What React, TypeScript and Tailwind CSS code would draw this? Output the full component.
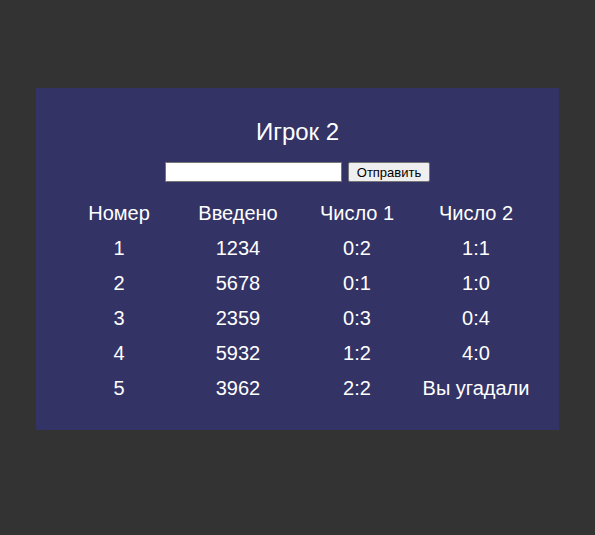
const ROWS = [
  ['1', '1234', '0:2', '1:1'],
  ['2', '5678', '0:1', '1:0'],
  ['3', '2359', '0:3', '0:4'],
  ['4', '5932', '1:2', '4:0'],
  ['5', '3962', '2:2', 'Вы угадали'],
]

export default function App() {
  return (
    <div className="min-h-[535px] bg-[#333333] pt-[88px] font-['Liberation_Sans',Arial,sans-serif]">
      <div className="mx-auto flex h-[342px] w-[523px] flex-col items-center bg-[#333366] pt-[30px] text-white">
        <h2 className="text-[24px] leading-[28px]">Игрок 2</h2>
        <div className="mt-[16px] flex items-center gap-[6px]">
          <input
            type="text"
            className="h-[20px] w-[177px] border border-[#767676] bg-white px-1 text-[13px] text-black outline-none"
          />
          <button className="h-[20px] w-[82px] rounded-[2px] border border-[#767676] bg-[#efefef] text-[13px] leading-none text-black">
            Отправить
          </button>
        </div>
        <table className="mt-[13px] w-[476px] table-fixed border-collapse text-[20px]">
          <thead>
            <tr className="h-[35px]">
              <th className="font-normal">Номер</th>
              <th className="font-normal">Введено</th>
              <th className="font-normal">Число 1</th>
              <th className="font-normal">Число 2</th>
            </tr>
          </thead>
          <tbody>
            {ROWS.map((r) => (
              <tr key={r[0]} className="h-[35px]">
                {r.map((c, i) => (
                  <td key={i} className="text-center">{c}</td>
                ))}
              </tr>
            ))}
          </tbody>
        </table>
      </div>
    </div>
  )
}
